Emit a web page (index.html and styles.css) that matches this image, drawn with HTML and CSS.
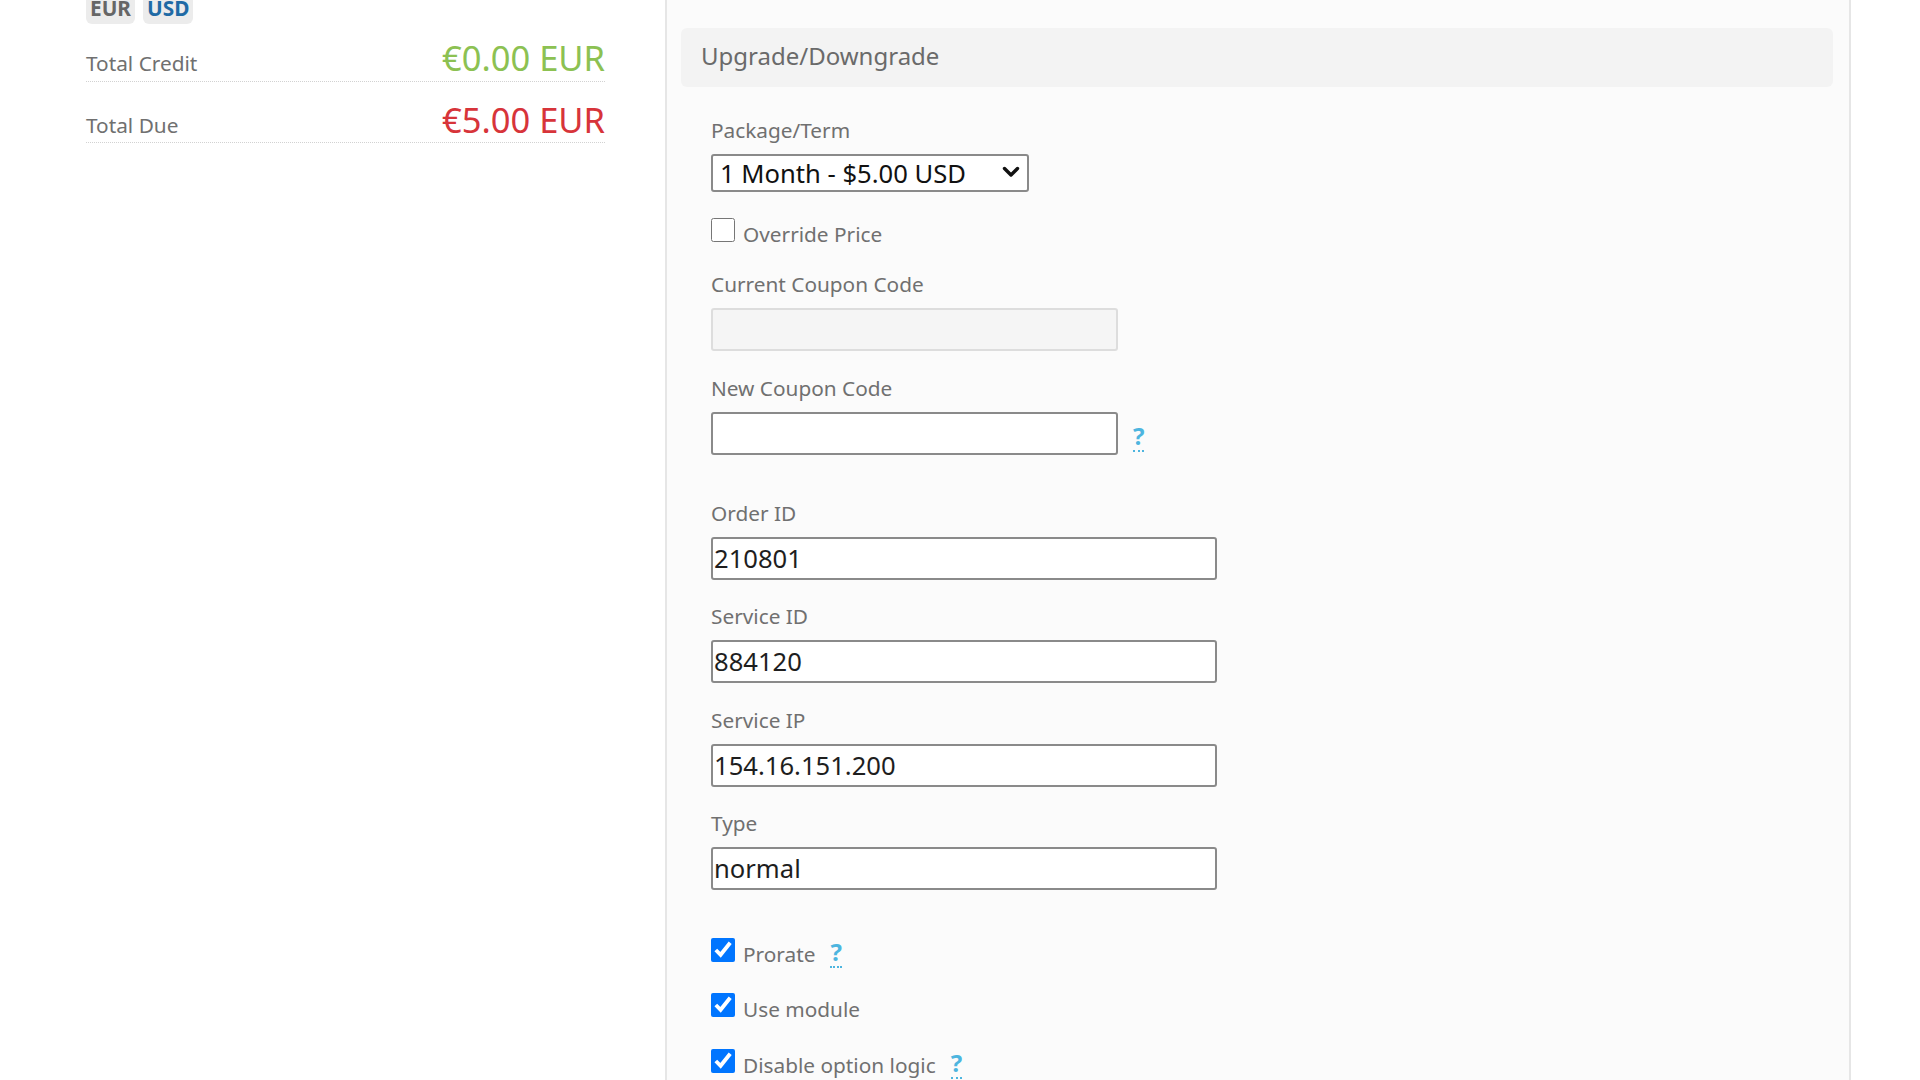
FILE: index.html
```html
<!DOCTYPE html>
<html lang="en">
<head>
<meta charset="utf-8">
<title>Upgrade/Downgrade</title>
<link rel="stylesheet" href="styles.css">
</head>
<body>
<div class="page">
  <aside class="summary">
    <div class="currency">
      <span class="cur-btn">EUR</span>
      <span class="cur-btn cur-active">USD</span>
    </div>
    <div class="total-row total-first">
      <span class="total-label">Total Credit</span>
      <span class="total-amount credit">€0.00 EUR</span>
    </div>
    <div class="total-row">
      <span class="total-label">Total Due</span>
      <span class="total-amount due">€5.00 EUR</span>
    </div>
  </aside>

  <main class="panel">
    <h2 class="panel-title">Upgrade/Downgrade</h2>
    <form class="form">
      <div class="field field-first">
        <label class="field-label" for="pkg">Package/Term</label>
        <div class="select-wrap">
          <select id="pkg" class="control select">
            <option>1 Month - $5.00 USD</option>
          </select>
          <svg class="chevron" width="18" height="12" viewBox="0 0 18 12" aria-hidden="true">
            <polyline points="2.5,2.5 9,9 15.5,2.5" fill="none" stroke="#111111" stroke-width="3.4" stroke-linecap="round" stroke-linejoin="round"/>
          </svg>
        </div>
      </div>

      <div class="check-row check-override">
        <label class="check"><input type="checkbox"><span>Override Price</span></label>
      </div>

      <div class="field">
        <label class="field-label" for="curcoupon">Current Coupon Code</label>
        <input id="curcoupon" class="control w-sm readonly" type="text" readonly>
      </div>

      <div class="field">
        <label class="field-label" for="newcoupon">New Coupon Code</label>
        <div class="inline">
          <input id="newcoupon" class="control w-sm" type="text">
          <span class="help">?</span>
        </div>
      </div>

      <div class="field field-gap">
        <label class="field-label" for="orderid">Order ID</label>
        <input id="orderid" class="control w-md" type="text" value="210801">
      </div>

      <div class="field">
        <label class="field-label" for="serviceid">Service ID</label>
        <input id="serviceid" class="control w-md" type="text" value="884120">
      </div>

      <div class="field">
        <label class="field-label" for="serviceip">Service IP</label>
        <input id="serviceip" class="control w-md" type="text" value="154.16.151.200">
      </div>

      <div class="field">
        <label class="field-label" for="type">Type</label>
        <input id="type" class="control w-md" type="text" value="normal">
      </div>

      <div class="check-row check-first">
        <label class="check"><input type="checkbox" checked><span>Prorate</span></label>
        <span class="help">?</span>
      </div>

      <div class="check-row">
        <label class="check"><input type="checkbox" checked><span>Use module</span></label>
      </div>

      <div class="check-row">
        <label class="check"><input type="checkbox" checked><span>Disable option logic</span></label>
        <span class="help">?</span>
      </div>
    </form>
  </main>
</div>
</body>
</html>
```

FILE: styles.css
```css
* {
  box-sizing: border-box;
}

html,
body {
  margin: 0;
  padding: 0;
  height: 100%;
  overflow: hidden;
  background: #ffffff;
}

body {
  font-family: "Noto Sans", "Open Sans", "DejaVu Sans", sans-serif;
  color: #6e6e6e;
}

.page {
  display: flex;
  align-items: stretch;
  min-height: 1080px;
}

/* ---------- left summary column ---------- */
.summary {
  flex: none;
  width: 665px;
  padding: 0 60px 0 86px;
}

.currency {
  display: flex;
  gap: 8px;
}

.cur-btn {
  display: inline-block;
  height: 24px;
  padding: 0 4px;
  font-size: 20.8px;
  font-weight: 700;
  line-height: 16px;
  color: #666666;
  background: #ececec;
  border-radius: 0 0 6px 6px;
}

.cur-active {
  color: #1f6aa5;
}

.total-row {
  display: flex;
  justify-content: space-between;
  align-items: baseline;
  padding: 21px 0 5px;
  border-bottom: 1px dotted #d2d2d2;
}

.total-first {
  margin-top: -4px;
}

.total-label {
  font-size: 20.8px;
  line-height: 20px;
  color: #707070;
}

.total-amount {
  font-size: 34.5px;
  line-height: 34.5px;
}

.credit {
  color: #8cc152;
}

.due {
  color: #d7343a;
}

/* ---------- right panel ---------- */
.panel {
  flex: none;
  width: 1186px;
  min-height: 1080px;
  padding: 0 16px 0 14px;
  background: #fbfbfb;
  border-left: 2px solid #e6e6e6;
  border-right: 2px solid #e6e6e6;
}

.panel-title {
  margin: 28px 0 0;
  height: 59px;
  padding: 0 20px;
  font-size: 24px;
  font-weight: 400;
  line-height: 55px;
  color: #6a6a6a;
  background: #f3f3f3;
  border-radius: 6px;
}

.form {
  padding-left: 30px;
}

.field {
  margin-top: 22.5px;
}

.field-first {
  margin-top: 28.6px;
}

.field-gap {
  margin-top: 44px;
}

.field-label {
  display: block;
  font-size: 20.8px;
  line-height: 28px;
  color: #707070;
}

.control {
  display: block;
  margin: 10px 0 0;
  height: 43px;
  padding: 0 1px;
  font-family: "Noto Sans", "Open Sans", sans-serif;
  font-size: 25.6px;
  color: #1e1e1e;
  background: #ffffff;
  border: 2px solid #8a8a8a;
  border-radius: 3px;
  outline: none;
}

.select-wrap {
  position: relative;
  width: 318px;
  margin-top: 10px;
}

.select {
  -webkit-appearance: none;
  appearance: none;
  width: 318px;
  height: 38px;
  margin: 0;
  padding: 0 40px 0 7px;
  color: #111111;
}

.chevron {
  position: absolute;
  top: 12px;
  right: 9px;
  pointer-events: none;
}

.w-sm {
  width: 407px;
}

.w-md {
  width: 506px;
}

.readonly {
  background: #f5f5f5;
  border-color: #dddddd;
}

.inline {
  display: flex;
  align-items: flex-end;
  margin-top: 10px;
}

.inline .control {
  margin-top: 0;
}

.inline .help {
  margin-bottom: 3px;
}

.help {
  display: inline-block;
  margin-left: 15px;
  padding-bottom: 2px;
  font-size: 24px;
  font-weight: 700;
  line-height: 24px;
  color: #4db5df;
  border-bottom: 2px dotted #4db5df;
}

.check-row {
  display: flex;
  align-items: flex-end;
  margin-top: 27.5px;
  font-size: 20.8px;
  line-height: 28px;
}

.check-override {
  margin-top: 28px;
}

.check-first {
  margin-top: 49.5px;
}

.check {
  display: flex;
  align-items: flex-end;
  color: #707070;
}

.check input {
  width: 24px;
  height: 24px;
  margin: -2px 8px 6px 0;
}
```
